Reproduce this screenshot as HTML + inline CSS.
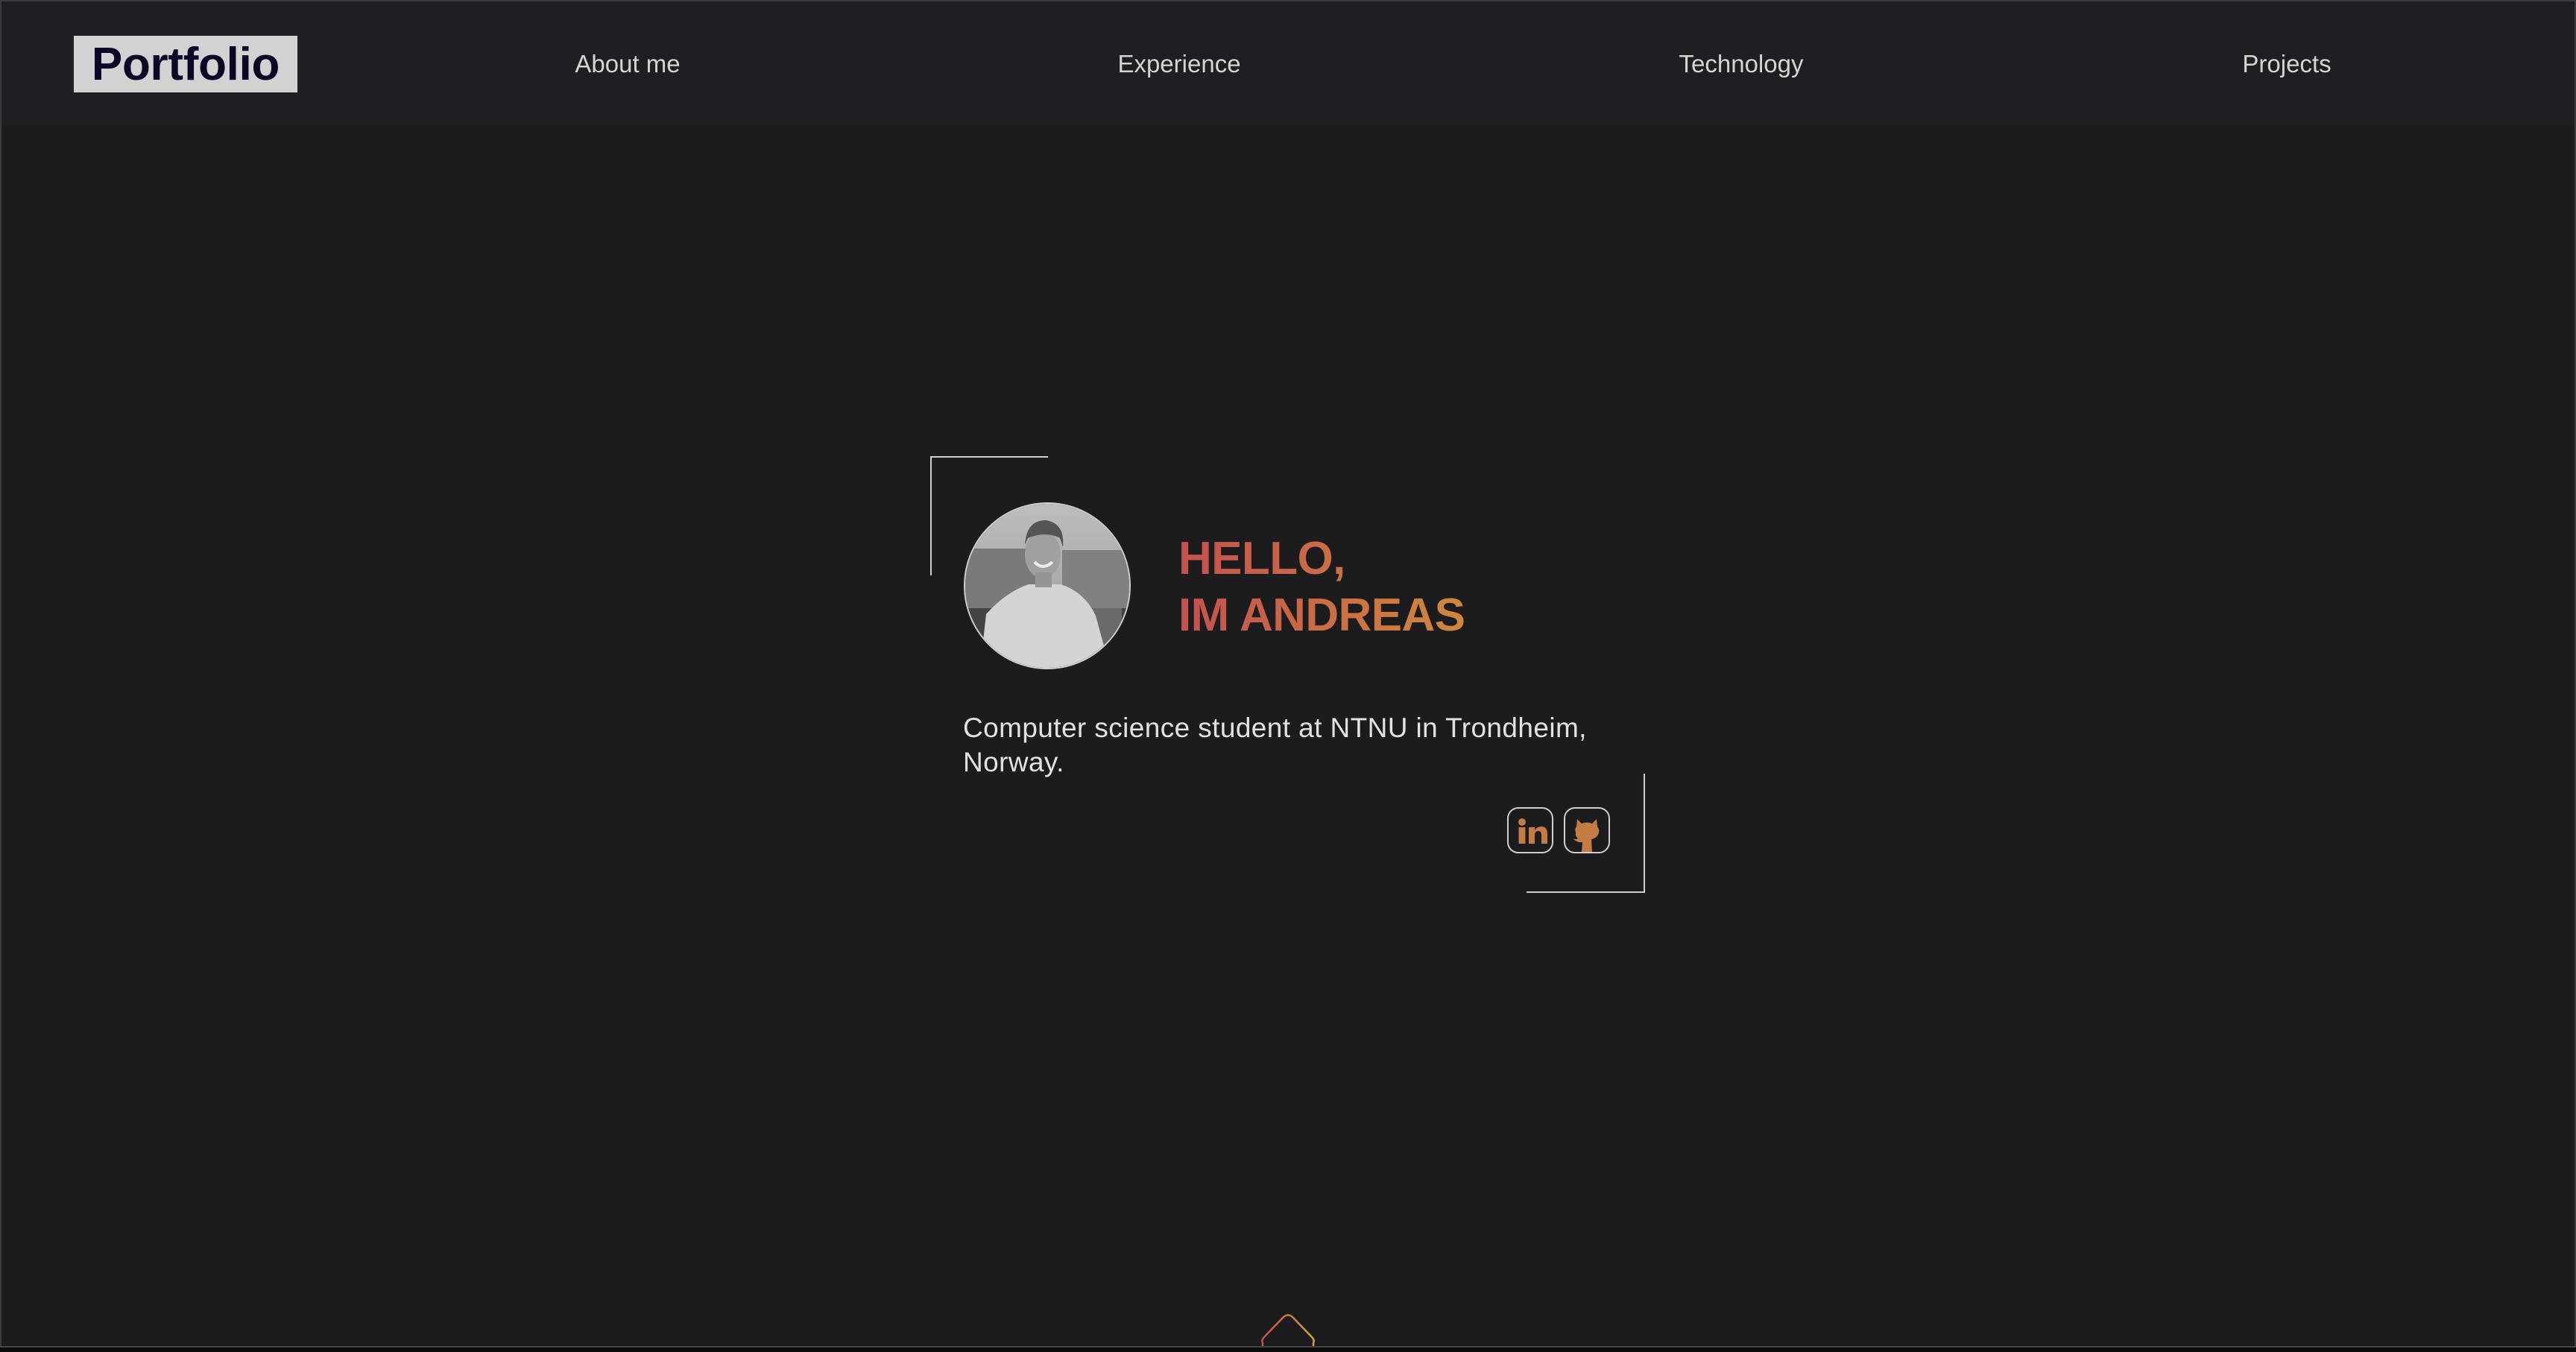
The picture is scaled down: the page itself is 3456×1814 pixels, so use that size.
<!DOCTYPE html>
<html><head><meta charset="utf-8"><style>
html,body{margin:0;padding:0;}
body{width:3456px;height:1814px;background:#1c1c1e;position:relative;overflow:hidden;font-family:"Liberation Sans",sans-serif;}
.frame{position:absolute;left:0;top:0;width:3456px;height:1806px;box-sizing:border-box;border:2px solid #3b3b3d;border-bottom:none;}
.header{position:absolute;left:2px;top:2px;right:2px;height:166px;background:#1f1e22;}
.logo{position:absolute;left:97px;top:46px;width:300px;height:76px;background:#d2d2d2;color:#0a0826;font-weight:bold;font-size:62px;line-height:78px;text-align:center;letter-spacing:-0.3px;}
.nav{position:absolute;top:67px;font-size:33px;color:#d4d4d4;transform:translateX(-50%);white-space:nowrap;}
.line{position:absolute;background:#cfcfcf;}
.photo{position:absolute;left:1293px;top:674px;width:220px;height:220px;border:2px solid #cfcfcf;border-radius:50%;overflow:hidden;}
.hello{position:absolute;left:1581px;top:712px;font-size:62px;font-weight:bold;line-height:76px;background:linear-gradient(90deg,#c4504f,#cf883c);-webkit-background-clip:text;background-clip:text;color:transparent;letter-spacing:-0.6px;}
.para{position:absolute;left:1292px;top:954px;font-size:37px;line-height:46px;color:#e2e2e2;width:920px;letter-spacing:0.4px;}
.icon{position:absolute;top:1083px;width:58px;height:58px;border:2px solid #cfcfcf;border-radius:15px;}
.bottom{position:absolute;left:0;top:1806px;width:3456px;height:8px;background:#0c0c0c;border-top:2px solid #444;box-sizing:border-box;}
</style></head><body>
<div class="frame"></div>
<div class="header">
<div class="logo">Portfolio</div>
</div>
<div class="nav" style="left:842px">About me</div>
<div class="nav" style="left:1582px">Experience</div>
<div class="nav" style="left:2336px">Technology</div>
<div class="nav" style="left:3068px">Projects</div>

<div class="line" style="left:1248px;top:612px;width:158px;height:2px"></div>
<div class="line" style="left:1248px;top:612px;width:2px;height:160px"></div>
<div class="line" style="left:2205px;top:1038px;width:2px;height:160px"></div>
<div class="line" style="left:2048px;top:1196px;width:159px;height:2px"></div>

<div class="photo">
<svg width="220" height="220" viewBox="0 0 220 220">
<defs><linearGradient id="sky" x1="0" y1="0" x2="0" y2="1"><stop offset="0" stop-color="#bdbdbd"/><stop offset="1" stop-color="#9a9a9a"/></linearGradient></defs>
<rect width="220" height="220" fill="url(#sky)"/>
<rect x="0" y="60" width="95" height="80" fill="#7a7a7a"/>
<rect x="130" y="62" width="90" height="80" fill="#808080"/>
<rect x="0" y="140" width="220" height="80" fill="#444"/>
<rect x="160" y="140" width="50" height="50" fill="#6a6a6a"/>
<path d="M20 220 L28 148 Q55 118 85 108 L128 108 Q160 118 175 150 L188 198 L168 206 L165 220 Z" fill="#d4d4d4"/>
<ellipse cx="104" cy="68" rx="24" ry="32" fill="#a0a0a0"/>
<path d="M80 55 Q82 22 108 22 Q134 26 131 58 L127 46 Q108 36 84 46 Z" fill="#555"/>
<path d="M93 78 Q104 90 117 78" stroke="#eee" stroke-width="4" fill="none"/>
<rect x="94" y="92" width="22" height="20" fill="#959595"/>
</svg>
</div>

<div class="hello">HELLO,<br>IM ANDREAS</div>
<div class="para">Computer science student at NTNU in Trondheim, Norway.</div>

<div class="icon" style="left:2022px">
<svg width="58" height="58" viewBox="0 0 58 58"><circle cx="18" cy="18" r="5" fill="#c27c44"/><rect x="13.5" y="25" width="9" height="22" fill="#c27c44"/><path d="M27 25h8v4q3-5 9-5 8 0 8 10v13h-8v-12q0-5-4-5-5 0-5 6v11h-8z" fill="#c27c44"/></svg>
</div>
<div class="icon" style="left:2098px">
<svg width="58" height="58" viewBox="0 0 58 58"><path d="M16 14 L22 20 Q29 17 36 20 L42 14 L43 24 Q47 29 44 35 Q41 40 35 41 L36 58 L22 58 L23 45 Q16 46 10 40 Q14 42 17 40 Q13 37 14 32 Q12 27 15 24 Z" fill="#c27c44"/></svg>
</div>

<svg style="position:absolute;left:1690px;top:1760px" width="76" height="48" viewBox="0 0 76 48">
<defs><linearGradient id="g" x1="0" y1="0" x2="1" y2="0"><stop offset="0" stop-color="#c4504f"/><stop offset="1" stop-color="#d8a03a"/></linearGradient></defs>
<path d="M4 48 L4 42 Q2 38 6 34 L32 7 Q38 2 44 7 L70 34 Q74 38 72 42 L72 48" fill="none" stroke="url(#g)" stroke-width="2.5"/>
</svg>
<div class="bottom"></div>
</body></html>
